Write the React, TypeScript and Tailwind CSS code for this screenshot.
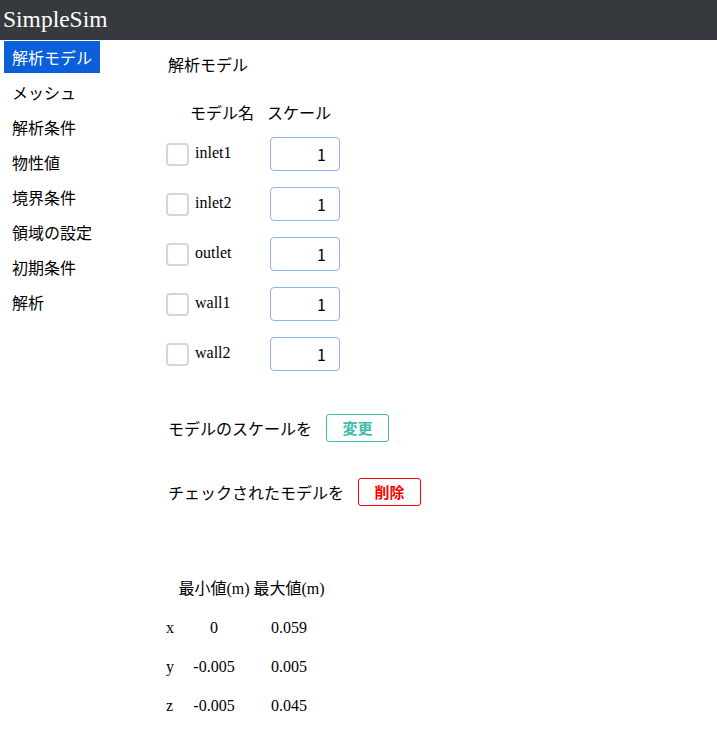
import React from "react";

const menu = ["解析モデル", "メッシュ", "解析条件", "物性値", "境界条件", "領域の設定", "初期条件", "解析"];
const models = ["inlet1", "inlet2", "outlet", "wall1", "wall2"];
const bounds = [
  { axis: "x", min: "0", max: "0.059" },
  { axis: "y", min: "-0.005", max: "0.005" },
  { axis: "z", min: "-0.005", max: "0.045" },
];

const sans = "font-['Noto_Sans_CJK_JP',sans-serif]";
const serif = "font-['Liberation_Serif','Noto_Sans_CJK_JP',serif]";

export default function App() {
  return (
    <div className="w-[717px] h-[752px] bg-white text-black">
      <header className="h-[40px] bg-[#36393e] flex items-center px-[3px]">
        <span className={`${serif} text-[23.5px] text-white leading-none`}>SimpleSim</span>
      </header>
      <div className="flex">
        <nav className={`${sans} w-[166px] shrink-0 pl-[4px] pt-[1px] flex flex-col items-start gap-[3px]`}>
          {menu.map((m, i) => (
            <div
              key={m}
              className={`h-[32px] px-[8px] flex items-center text-[16px] ${i === 0 ? "bg-[#0b60d9] text-white" : "text-black"}`}
            >
              {m}
            </div>
          ))}
        </nav>
        <main className="flex flex-col">
          <div className={`${sans} text-[16px] h-6 leading-6 mt-[12px] ml-[2px]`}>解析モデル</div>
          <div className={`${sans} text-[16px] h-6 leading-6 mt-[24px] flex`}>
            <span className="ml-[24px] w-[77px]">モデル名</span>
            <span>スケール</span>
          </div>
          <div className="flex flex-col gap-[16px] mt-[13px]">
            {models.map((m) => (
              <div key={m} className="flex items-center h-[34px]">
                <div className="w-[23px] h-[23px] border-2 border-[#d3d7dd] rounded-[4px] bg-white" />
                <span className={`${serif} text-[16px] ml-[6px] w-[75px] -mt-[2px]`}>{m}</span>
                <div
                  className={`w-[70px] h-[34px] border border-[#8db5ef] rounded-[4px] flex items-center justify-end pr-[13px] ${sans} text-[16px]`}
                >
                  1
                </div>
              </div>
            ))}
          </div>
          <div className={`${sans} flex items-center mt-[43px] ml-[2px] h-[28px] text-[16px]`}>
            <span>モデルのスケールを</span>
            <button className="ml-[14px] w-[63px] h-[28px] border border-[#3cbcab] rounded-[3px] text-[#3cbcab] font-bold text-[15px] flex items-center justify-center">
              変更
            </button>
          </div>
          <div className={`${sans} flex items-center mt-[36px] ml-[2px] h-[28px] text-[16px]`}>
            <span>チェックされたモデルを</span>
            <button className="ml-[14px] w-[63px] h-[28px] border border-[#ff0000] rounded-[3px] text-[#ff0000] font-bold text-[15px] flex items-center justify-center">
              削除
            </button>
          </div>
          <div className={`${serif} text-[16px] mt-[73px] grid grid-cols-[11px_74px_76px] gap-y-[19px]`}>
            <span className="h-[20px]" />
            <span className="h-[20px] leading-[20px] text-center">最小値(m)</span>
            <span className="h-[20px] leading-[20px] text-center">最大値(m)</span>
            {bounds.map((b) => (
              <React.Fragment key={b.axis}>
                <span className="h-[20px] leading-[20px]">{b.axis}</span>
                <span className="h-[20px] leading-[20px] text-center">{b.min}</span>
                <span className="h-[20px] leading-[20px] text-center">{b.max}</span>
              </React.Fragment>
            ))}
          </div>
        </main>
      </div>
    </div>
  );
}
